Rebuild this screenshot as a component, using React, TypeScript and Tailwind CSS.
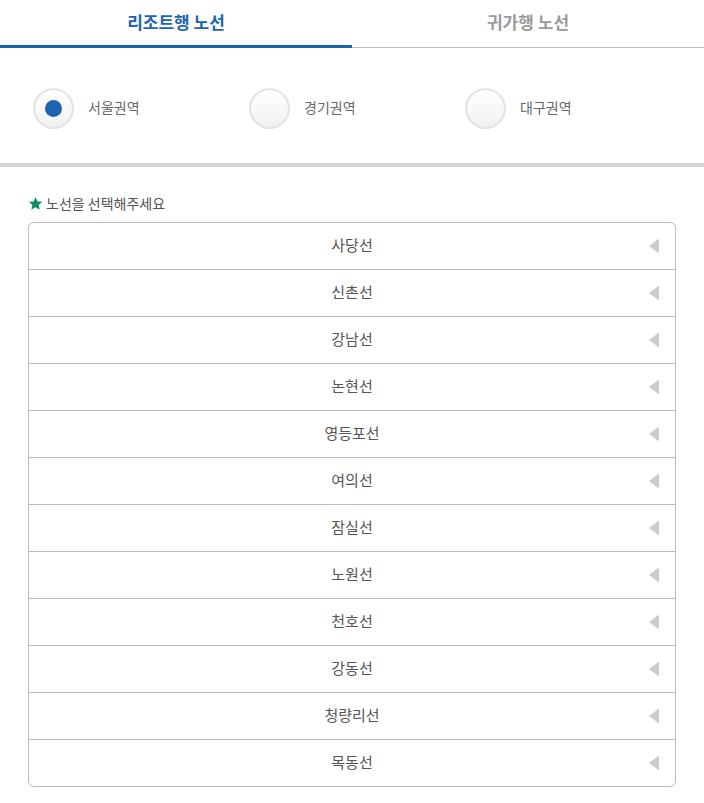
import React from "react";

const lines = ["사당선","신촌선","강남선","논현선","영등포선","여의선","잠실선","노원선","천호선","강동선","청량리선","목동선"];
const regions = ["서울권역","경기권역","대구권역"];

export default function App() {
  return (
    <div className="w-[704px] min-h-[803px] bg-white" style={{ fontFamily: '"Noto Sans CJK KR", "Noto Sans", sans-serif' }}>
      <div className="flex h-[48px] border-b border-[#bdbdbd]">
        <div className="flex-1 flex items-center justify-center border-b-[3px] border-[#1c64b0] -mb-px text-[17px] font-bold text-[#1c64b0] pb-[2px]">리조트행 노선</div>
        <div className="flex-1 flex items-center justify-center text-[17px] font-bold text-[#9a9a9a] pb-[4px]">귀가행 노선</div>
      </div>
      <div className="flex h-[115px] items-center pl-[33px] pt-[5px]">
        {regions.map((r, i) => (
          <div key={r} className="w-[216px] flex items-center">
            <div className="w-[41px] h-[41px] rounded-full border-2 border-[#e2e2e2] bg-gradient-to-b from-white to-[#f1f1f1] flex items-center justify-center">
              {i === 0 && <div className="w-[17px] h-[17px] rounded-full bg-[#1c64b0]" />}
            </div>
            <span className="ml-[14px] text-[14px] text-[#666] -mt-[2px]">{r}</span>
          </div>
        ))}
      </div>
      <div className="h-[4px] bg-[#d3d3d3]" />
      <div className="px-[28px] pt-[26px]">
        <div className="flex items-center h-[20px] text-[14px] text-[#555]">
          <svg width="15" height="15" viewBox="0 0 24 24" className="mr-[3px]">
            <path d="M12 1.5l3.1 7.1 7.7.7-5.8 5.1 1.7 7.6L12 18l-6.7 4 1.7-7.6L1.2 9.3l7.7-.7z" fill="#0f8f66" />
          </svg>
          노선을 선택해주세요
        </div>
        <div className="mt-[9px] border border-[#bbbbbb] rounded-[6px] overflow-hidden">
          {lines.map((l, i) => (
            <div key={l} className={`relative flex items-center justify-center text-[15px] text-[#555] ${i > 0 ? "h-[47px] border-t border-[#bbbbbb]" : "h-[46px]"}`}>
              <span className="-mt-px">{l}</span>
              <svg width="11" height="15" viewBox="0 0 11 15" className="absolute right-[15px] top-1/2 -translate-y-1/2">
                <path d="M0 7.5L10 0v15z" fill="#cccccc" />
              </svg>
            </div>
          ))}
        </div>
      </div>
    </div>
  );
}
